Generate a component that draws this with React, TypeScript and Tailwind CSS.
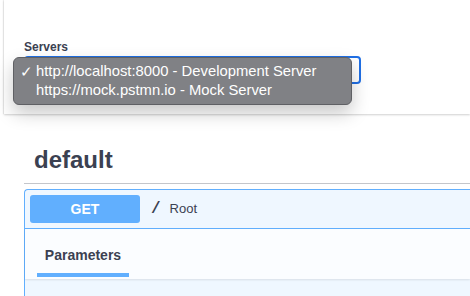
export default function App() {
  return (
    <div className="h-[296px] w-[470px] overflow-hidden bg-white font-['Liberation_Sans',Arial,sans-serif] text-[#3b4151]">
      <ServersPanel />
      <div className="ml-6 mt-[31px] border-b border-[#c4c6cb] pb-[8px] pl-[10px] text-[24px] font-bold leading-[30px]">
        default
      </div>
      <Operation />
    </div>
  );
}

function ServersPanel() {
  return (
    <div className="relative ml-1 h-[114px] bg-white pl-5 pt-[39px] shadow-[0_1px_2px_rgba(0,0,0,0.18),-1px_0_1px_rgba(0,0,0,0.06)]">
      <div className="text-[12px] font-bold leading-4">Servers</div>
      <div className="mt-px h-[28px] w-[337px] rounded-[4px] border-2 border-[#1f6fe5] bg-white" />
      <div className="absolute left-[9px] top-[57px] w-[339px] rounded-[6px] border border-[#5f6064] bg-[#808185] py-[4px] text-[14.8px] leading-[19px] text-white shadow-[0_8px_18px_rgba(0,0,0,0.22)]">
        <div className="flex">
          <span className="w-[22px] pl-[6px] text-[15px]">✓</span>
          <span>http://localhost:8000 - Development Server</span>
        </div>
        <div className="flex">
          <span className="w-[22px]" />
          <span>https://mock.pstmn.io - Mock Server</span>
        </div>
      </div>
    </div>
  );
}

function Operation() {
  return (
    <div className="ml-6 mt-[5px] rounded-l-[4px] border border-r-0 border-[#61affe] bg-[#eff7ff]">
      <div className="flex items-center border-b border-[#61affe] p-[5px]">
        <div className="flex h-[28px] w-[110px] items-center justify-center rounded-[3px] bg-[#61affe] text-[14px] font-bold text-white">
          GET
        </div>
        <span className="ml-[11px] font-['Liberation_Mono',monospace] text-[16px] font-semibold leading-none">/</span>
        <span className="ml-[9px] text-[13px]">Root</span>
      </div>
      <div className="h-[50px] bg-[#fbfdff] pl-3 shadow-[0_1px_2px_rgba(0,0,0,0.1)]">
        <div className="flex w-[92px] flex-col pt-[16px]">
          <div className="text-center text-[14px] font-bold leading-5">Parameters</div>
          <div className="mt-2 h-1 bg-[#61affe]" />
        </div>
      </div>
      <div className="h-[30px]" />
    </div>
  );
}
